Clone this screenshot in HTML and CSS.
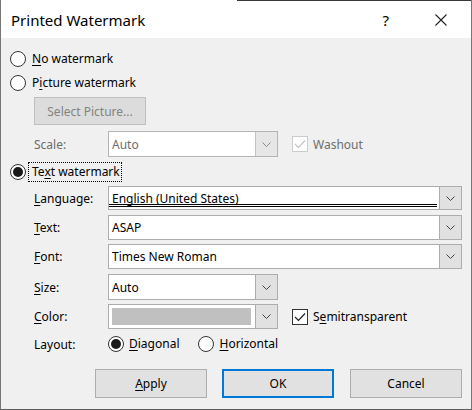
FILE: index.html
```html
<!DOCTYPE html>
<html>
<head>
<meta charset="utf-8">
<link rel="stylesheet" href="styles.css">
</head>
<body>
<div class="dialog">
  <div class="titlebar">
    <span class="title">Printed Watermark</span>
    <span class="help">?</span>
    <svg class="close" width="12" height="12" viewBox="0 0 12 12"><path d="M0.5 0.5 L11.5 11.5 M11.5 0.5 L0.5 11.5" stroke="#222" stroke-width="1.1" fill="none"/></svg>
  </div>
  <div class="content">
    <div class="radio-row row-no"><span class="radio"></span><span class="rtext"><u>N</u>o watermark</span></div>
    <div class="radio-row row-pic"><span class="radio"></span><span class="rtext">P<u>i</u>cture watermark</span></div>
    <div class="btn-row"><div class="btn btn-disabled">Select Picture...</div></div>
    <div class="field-row scale-row">
      <span class="lbl lbl-disabled">Scale:</span>
      <div class="combo combo-small combo-disabled"><span class="ctext">Auto</span><span class="arrow"><svg width="9" height="5" viewBox="0 0 9 5"><polyline points="0.5,0.5 4.5,4.5 8.5,0.5" fill="none" stroke="#8a8a8a"/></svg></span></div>
      <span class="check check-disabled"><svg width="12" height="10" viewBox="0 0 12 10"><polyline points="1,5 4.5,8.5 11,1.5" fill="none" stroke="#c4c4c4" stroke-width="1.2"/></svg></span>
      <span class="ctext-label lbl-disabled">Washout</span>
    </div>
    <div class="radio-row row-text"><span class="radio checked"></span><span class="rtext focus">Te<u>x</u>t watermark</span></div>

    <div class="field-row r-lang">
      <span class="lbl"><u>L</u>anguage:</span>
      <div class="combo combo-wide"><span class="ctext lang">English (United States)</span><span class="arrow"><svg width="9" height="5" viewBox="0 0 9 5"><polyline points="0.5,0.5 4.5,4.5 8.5,0.5" fill="none" stroke="#444"/></svg></span></div>
    </div>
    <div class="field-row r-text">
      <span class="lbl"><u>T</u>ext:</span>
      <div class="combo combo-wide"><span class="ctext">ASAP</span><span class="arrow"><svg width="9" height="5" viewBox="0 0 9 5"><polyline points="0.5,0.5 4.5,4.5 8.5,0.5" fill="none" stroke="#444"/></svg></span></div>
    </div>
    <div class="field-row r-font">
      <span class="lbl"><u>F</u>ont:</span>
      <div class="combo combo-wide"><span class="ctext">Times New Roman</span><span class="arrow"><svg width="9" height="5" viewBox="0 0 9 5"><polyline points="0.5,0.5 4.5,4.5 8.5,0.5" fill="none" stroke="#444"/></svg></span></div>
    </div>
    <div class="field-row r-size">
      <span class="lbl"><u>S</u>ize:</span>
      <div class="combo combo-small"><span class="ctext">Auto</span><span class="arrow"><svg width="9" height="5" viewBox="0 0 9 5"><polyline points="0.5,0.5 4.5,4.5 8.5,0.5" fill="none" stroke="#444"/></svg></span></div>
    </div>
    <div class="field-row r-color">
      <span class="lbl"><u>C</u>olor:</span>
      <div class="combo combo-small"><span class="swatch"></span><span class="arrow"><svg width="9" height="5" viewBox="0 0 9 5"><polyline points="0.5,0.5 4.5,4.5 8.5,0.5" fill="none" stroke="#444"/></svg></span></div>
      <span class="check"><svg width="12" height="10" viewBox="0 0 12 10"><polyline points="1,5 4.5,8.5 11,1.5" fill="none" stroke="#222" stroke-width="1.2"/></svg></span>
      <span class="ctext-label">S<u>e</u>mitransparent</span>
    </div>
    <div class="field-row r-layout">
      <span class="lbl">Layout:</span>
      <span class="radio checked"></span><span class="rtext opt"><u>D</u>iagonal</span>
      <span class="radio radio-h"></span><span class="rtext opt"><u>H</u>orizontal</span>
    </div>
    <div class="buttons">
      <div class="btn"><u>A</u>pply</div>
      <div class="btn btn-default">OK</div>
      <div class="btn">Cancel</div>
    </div>
  </div>
</div>
</body>
</html>
```

FILE: styles.css
```css
html, body {
  margin: 0;
  padding: 0;
  background: #f0f0f0;
}
body {
  font-family: "Noto Sans", "Open Sans", sans-serif;
  font-size: 12px;
  color: #000;
}
u { text-decoration: underline; text-underline-offset: 2px; }
.dialog {
  width: 472px;
  height: 410px;
  box-sizing: border-box;
  border-left: 1px solid #767676;
  border-right: 1px solid #767676;
  border-bottom: 1px solid #5c5c5c;
  background: #f0f0f0;
  display: flex;
  flex-direction: column;
}
.titlebar {
  height: 38px;
  flex: none;
  display: flex;
  align-items: center;
  background: linear-gradient(to right, transparent 236px, #3a3a3a 236px) top left / 100% 1px no-repeat, #fff;
}
.title {
  font-size: 15px;
  margin-left: 10px;
  margin-top: 2px;
  flex: 1;
}
.help {
  font-size: 15px;
  margin-right: 46px;
  margin-top: 1px;
}
.close {
  margin-right: 24px;
  margin-top: 2px;
}
.content {
  display: flex;
  flex-direction: column;
  padding-left: 9px;
}
.radio-row {
  height: 20px;
  display: flex;
  align-items: center;
}
.radio {
  width: 16px;
  height: 16px;
  box-sizing: border-box;
  border: 1px solid #333;
  border-radius: 50%;
  background: #fff;
  display: flex;
  align-items: center;
  justify-content: center;
  flex: none;
}
.radio.checked::after {
  content: "";
  width: 10px;
  height: 10px;
  border-radius: 50%;
  background: #1a1a1a;
}
.rtext { margin-left: 6px; line-height: 18px; }
.row-no { margin-top: 11px; }
.row-pic { margin-top: 4px; }
.btn-row { margin-top: 4px; padding-left: 24px; display: flex; }
.btn {
  width: 112px;
  height: 29px;
  box-sizing: border-box;
  border: 1px solid #adadad;
  background: #e1e1e1;
  display: flex;
  align-items: center;
  justify-content: center;
}
.btn-disabled {
  height: 28px;
  background: #dcdcdc;
  border-color: #bfbfbf;
  color: #838383;
}
.field-row {
  display: flex;
  align-items: center;
  height: 25px;
  padding-left: 24px;
}
.lbl { width: 74px; flex: none; }
.lbl-disabled { color: #6d6d6d; }
.scale-row { margin-top: 6px; height: 26px; }
.row-text { margin-top: 5px; }
.focus {
  margin-left: 3px;
  padding: 0 1px 0 3px;
  outline: 1px dotted #000;
  outline-offset: 0;
}
.combo {
  height: 100%;
  box-sizing: border-box;
  border: 1px solid #adadad;
  background: #fff;
  display: flex;
  align-items: stretch;
  flex: none;
}
.combo-small { width: 170px; }
.combo-wide { width: 354px; }
.combo-disabled { border-color: #b4b4b4; }
.ctext {
  flex: 1;
  padding-left: 3px;
  display: flex;
  align-items: center;
  white-space: nowrap;
  overflow: hidden;
}
.combo-disabled .ctext { color: #6d6d6d; }
.lang {
  margin-right: 2px;
  background: linear-gradient(#000, #000) left 17px / 100% 1px no-repeat, linear-gradient(#000, #000) left 19px / 100% 1px no-repeat;
}
.arrow {
  width: 21px;
  flex: none;
  border-left: 1px solid #adadad;
  background: #e1e1e1;
  display: flex;
  align-items: center;
  justify-content: center;
}
.combo-disabled .arrow { background: #e6e6e6; border-color: #c4c4c4; }
.swatch {
  flex: 1;
  margin: 3px 4px 3px 3px;
  background: #c0c0c0;
}
.check {
  width: 16px;
  height: 16px;
  box-sizing: border-box;
  border: 1px solid #333;
  background: #fff;
  margin-left: 14px;
  display: flex;
  align-items: center;
  justify-content: center;
  flex: none;
}
.check-disabled { border-color: #cccccc; }
.ctext-label { margin-left: 5px; }
.r-lang { margin-top: 4px; height: 24px; }
.r-text { margin-top: 5px; }
.r-font { margin-top: 4px; }
.r-size { margin-top: 5px; height: 26px; }
.r-color { margin-top: 4px; }
.r-layout { margin-top: 5px; height: 20px; }
.r-layout .opt { margin-left: 5px; }
.radio-h { margin-left: 19px; }
.buttons {
  margin-top: 15px;
  padding-left: 85px;
  display: flex;
  gap: 15px;
}
.buttons .btn:nth-child(3) { margin-left: 1px; }
.btn-default {
  border: 2px solid #0078d7;
}
```
